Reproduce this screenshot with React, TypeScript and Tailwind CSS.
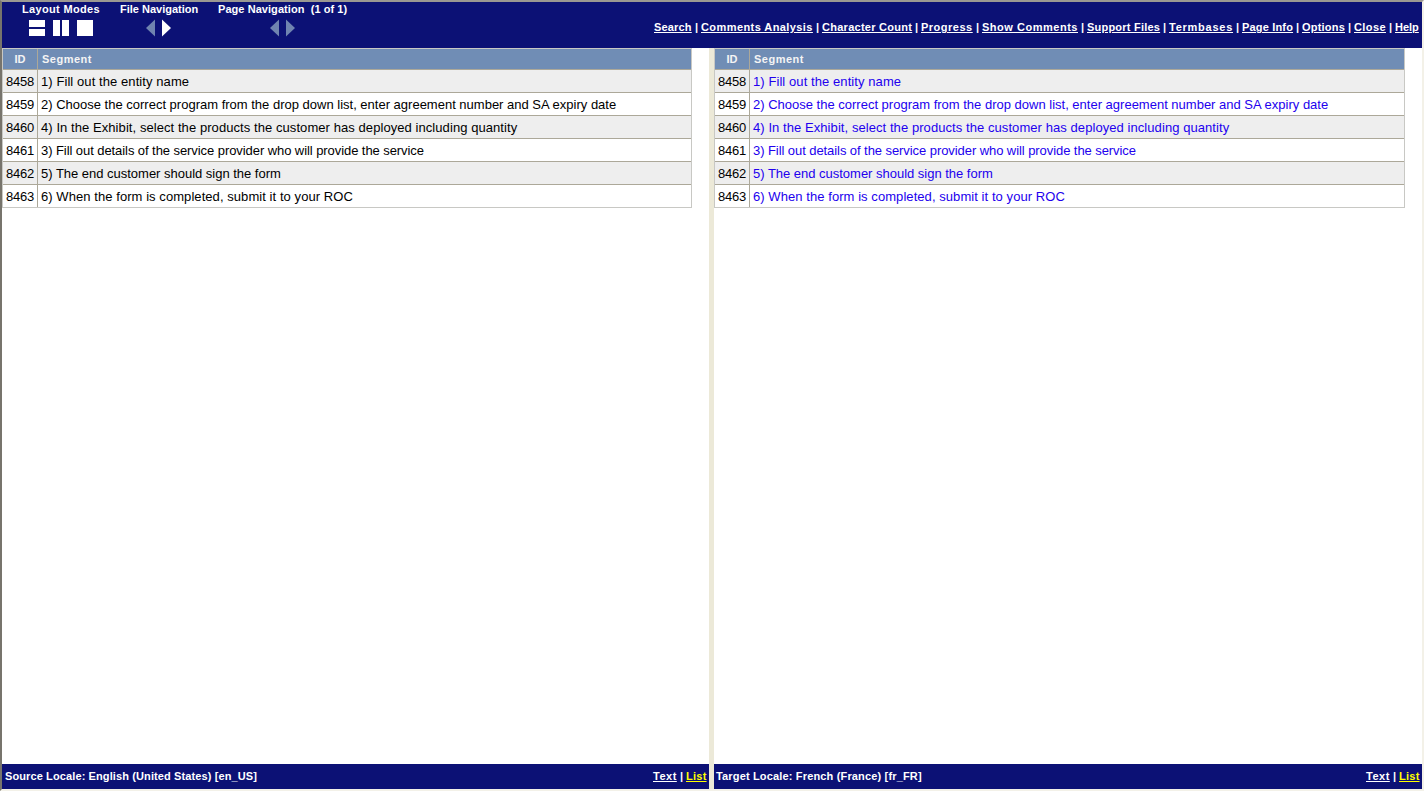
const links: [string, string][] = [
  ["Search", "w-[38px] tracking-[0.18px]"],
  ["Comments Analysis", "w-[112px] tracking-[0.42px]"],
  ["Character Count", "w-[90px] tracking-[0.27px]"],
  ["Progress", "w-[52px] tracking-[0.5px]"],
  ["Show Comments", "w-[96px] tracking-[0.52px]"],
  ["Support Files", "w-[73px] tracking-[0.22px]"],
  ["Termbases", "w-[64px] tracking-[0.75px]"],
  ["Page Info", "w-[51px] tracking-[0.17px]"],
  ["Options", "w-[43px] tracking-[0.2px]"],
  ["Close", "w-[32px] tracking-[0.4px]"],
  ["Help", "w-[24px]"],
];

const segments: [number, string, string][] = [
  [8458, "1) Fill out the entity name", "tracking-[0.08px]"],
  [8459, "2) Choose the correct program from the drop down list, enter agreement number and SA expiry date", "tracking-normal"],
  [8460, "4) In the Exhibit, select the products the customer has deployed including quantity", "tracking-[0.07px]"],
  [8461, "3) Fill out details of the service provider who will provide the service", "tracking-[-0.07px]"],
  [8462, "5) The end customer should sign the form", "tracking-[-0.015px]"],
  [8463, "6) When the form is completed, submit it to your ROC", "tracking-[0.065px]"],
];

function Arrows({ left, right }: { left: string; right: string }) {
  return (
    <svg width="26" height="18" viewBox="0 0 26 18">
      <path d="M9 0.5V17.5L0 9Z" fill={left} />
      <path d="M16 0.5V17.5L25 9Z" fill={right} />
    </svg>
  );
}

type PaneProps = { locale: string; localeStyle: string; textColor: string; inset: string };

function Pane({ locale, localeStyle, textColor, inset }: PaneProps) {
  return (
    <section className="flex h-full min-w-0 flex-1 flex-col bg-white">
      <div className="min-h-0 flex-1">
        <div className={`${inset} border border-[#c8c8c4]`}>
          <div className="flex h-5 bg-[#708db5] text-[11px] leading-5 font-bold text-[#f4f4f4]">
            <div className="w-[35px] border-r border-[#aca899] text-center">ID</div>
            <div className="pl-1 tracking-[0.5px]">Segment</div>
          </div>
          {segments.map(([id, text, tracking], i) => (
            <div key={id} className={`flex h-[23px] border-t border-[#aca899] text-[13px] leading-[23px] ${i % 2 === 0 ? "bg-[#eeeeee]" : "bg-white"}`}>
              <div className="w-[35px] border-r border-[#aca899] pl-[3px] tracking-[-0.23px]">{id}</div>
              <div className={`pl-[3px] whitespace-nowrap ${textColor} ${tracking}`}>{text}</div>
            </div>
          ))}
        </div>
      </div>
      <footer className="flex h-[25px] justify-between bg-[#0c1175] pr-[2px] pl-[2px] text-[11px] leading-[24px] font-bold text-white">
        <span className={localeStyle}>{locale}</span>
        <div className="flex">
          <u className="w-6 tracking-[0.5px]">Text</u>
          <span className="w-[9px] text-center">|</span>
          <u className="w-[21px] tracking-[0.25px] text-[#ffff00]">List</u>
        </div>
      </footer>
    </section>
  );
}

export default function App() {
  return (
    <div className="flex h-[791px] w-[1424px] flex-col border-t-2 border-r-2 border-b-2 border-l-2 border-t-[#9b9892] border-r-[#f3f1e8] border-b-[#f3f1e8] border-l-[#77746c] bg-white font-['Liberation_Sans',Arial,sans-serif]">
      <header className="flex h-[46px] justify-between bg-[#0c1175] text-[11px] font-bold text-white">
        <div className="flex pl-5 leading-[14px] whitespace-nowrap">
          <div className="w-[98px]">
            <div className="tracking-[0.33px]">Layout Modes</div>
            <svg className="mt-[4px] ml-[7px]" width="64" height="16" viewBox="0 0 64 16" fill="white">
              <path d="M0 0H16V7H0ZM0 9H16V16H0ZM24 0H31V16H24ZM33 0H40V16H33ZM48 0H64V16H48Z" />
            </svg>
          </div>
          <div className="w-[98px]">
            <div>File Navigation</div>
            <div className="mt-[3px] ml-[26px]"><Arrows left="#7084b0" right="#ffffff" /></div>
          </div>
          <div>
            <div className="tracking-[0.06px] whitespace-pre">Page Navigation  (1 of 1)</div>
            <div className="mt-[3px] ml-[52px]"><Arrows left="#7084b0" right="#7084b0" /></div>
          </div>
        </div>
        <nav className="flex pt-[18px] pr-[3px] leading-[14px] whitespace-nowrap">
          {links.map(([label, style], i) => (
            <div key={label} className="flex">
              {i > 0 && <span className="w-[9px] text-center">|</span>}
              <u className={style}>{label}</u>
            </div>
          ))}
        </nav>
      </header>
      <main className="flex min-h-0 flex-1">
        <div className="flex w-[707px]">
          <Pane locale="Source Locale: English (United States) [en_US]" localeStyle="pl-px tracking-[0.11px]" textColor="text-black" inset="w-[690px]" />
        </div>
        <div className="w-[5px] bg-[#ece9d8]" />
        <div className="flex w-[708px]">
          <Pane locale="Target Locale: French (France) [fr_FR]" localeStyle="tracking-[0.16px]" textColor="text-[#2200ee]" inset="w-[691px]" />
        </div>
      </main>
    </div>
  );
}
